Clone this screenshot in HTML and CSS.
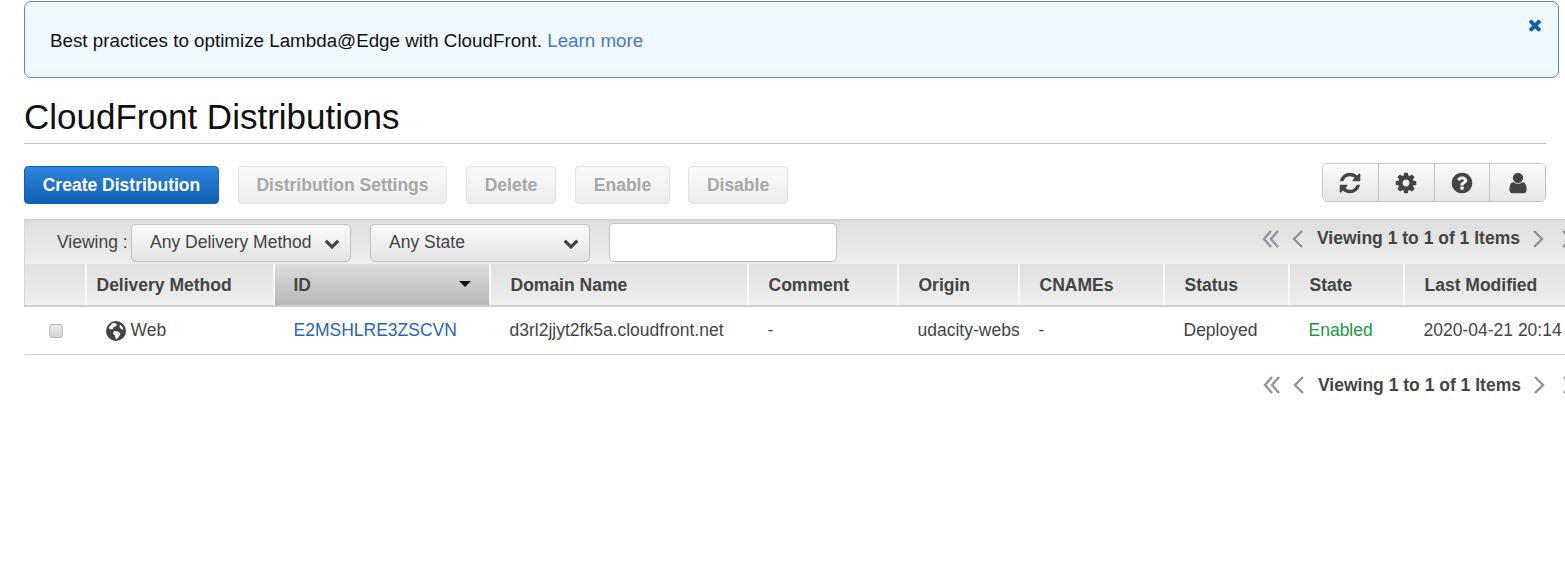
FILE: index.html
```html
<!DOCTYPE html>
<html lang="en">
<head>
  <meta charset="UTF-8">
  <title>CloudFront Distributions</title>
  <link rel="stylesheet" href="styles.css">
</head>
<body>

  <svg class="defs" width="0" height="0">
    <symbol id="i-times" viewBox="0 0 1792 1792"><path d="M1490 1322q0 40-28 68l-136 136q-28 28-68 28t-68-28l-294-294-294 294q-28 28-68 28t-68-28l-136-136q-28-28-28-68t28-68l294-294-294-294q-28-28-28-68t28-68l136-136q28-28 68-28t68 28l294 294 294-294q28-28 68-28t68 28l136 136q28 28 28 68t-28 68l-294 294 294 294q28 28 28 68z"/></symbol>
    <symbol id="i-down" viewBox="0 0 1792 1792"><path d="M1683 808l-742 741q-19 19-45 19t-45-19l-742-741q-19-19-19-45.5t19-45.5l166-165q19-19 45-19t45 19l531 531 531-531q19-19 45-19t45 19l166 165q19 19 19 45.5t-19 45.5z"/></symbol>
    <symbol id="i-first" viewBox="0 0 18 18"><path d="M9 1 2 9l7 8M16 1 9 9l7 8" fill="none" stroke="currentColor" stroke-width="2.4"/></symbol>
    <symbol id="i-prev" viewBox="0 0 12 18"><path d="M10 1 2 9l8 8" fill="none" stroke="currentColor" stroke-width="2.4"/></symbol>
    <symbol id="i-next" viewBox="0 0 12 18"><path d="M2 1l8 8-8 8" fill="none" stroke="currentColor" stroke-width="2.4"/></symbol>
  </svg>

  <div class="alert">
    <p>Best practices to optimize Lambda@Edge with CloudFront. <a href="#">Learn more</a></p>
    <svg class="alert-close"><use href="#i-times"/></svg>
  </div>

  <h1>CloudFront Distributions</h1>

  <div class="actions">
    <button class="btn btn-primary">Create Distribution</button>
    <button class="btn w-settings" disabled>Distribution Settings</button>
    <button class="btn w-delete" disabled>Delete</button>
    <button class="btn w-enable" disabled>Enable</button>
    <button class="btn w-disable" disabled>Disable</button>

    <div class="icon-group">
      <button>
        <svg viewBox="0 0 1792 1792"><path d="M1639 1056q0 5-1 7-64 268-268 434.5t-478 166.5q-146 0-282.5-55t-243.5-157l-129 129q-19 19-45 19t-45-19-19-45v-448q0-26 19-45t45-19h448q26 0 45 19t19 45-19 45l-137 137q71 66 161 102t187 36q134 0 250-65t186-179q11-17 53-117 8-23 30-23h192q13 0 22.5 9.5t9.5 22.5zm25-800v448q0 26-19 45t-45 19h-448q-26 0-45-19t-19-45 19-45l138-138q-148-137-349-137-134 0-250 65t-186 179q-11 17-53 117-8 23-30 23h-199q-13 0-22.5-9.5t-9.5-22.5v-7q65-268 270-434.5t480-166.5q146 0 284 55.5t245 156.5l130-129q19-19 45-19t45 19 19 45z"/></svg>
      </button>
      <button>
        <svg viewBox="0 0 1792 1792"><path d="M1152 896q0-106-75-181t-181-75-181 75-75 181 75 181 181 75 181-75 75-181zm512-109v222q0 12-8 23t-20 13l-185 28q-19 54-39 91 35 50 107 138 10 12 10 25t-9 23q-27 37-99 108t-94 71q-12 0-26-9l-138-108q-44 23-91 38-16 136-29 186-7 28-36 28h-222q-14 0-24.5-8.5t-11.5-21.5l-28-184q-49-16-90-37l-141 107q-10 9-25 9-14 0-25-11-126-114-165-168-7-10-7-23 0-12 8-23 15-21 51-66.5t54-70.5q-27-50-41-99l-183-27q-13-2-21-12.5t-8-23.5v-222q0-12 8-23t19-13l186-28q14-46 39-92-40-57-107-138-10-12-10-24 0-10 9-23 26-36 98.5-107.5t94.5-71.5q13 0 26 10l138 107q44-23 91-38 16-136 29-186 7-28 36-28h222q14 0 24.5 8.5t11.5 21.5l28 184q49 16 90 37l142-107q9-9 24-9 13 0 25 10 129 119 165 170 7 8 7 22 0 12-8 23-15 21-51 66.5t-54 70.5q26 50 41 98l183 28q13 2 21 12.5t8 23.5z"/></svg>
      </button>
      <button>
        <svg viewBox="0 0 1792 1792"><path d="M1024 1376v-192q0-14-9-23t-23-9h-192q-14 0-23 9t-9 23v192q0 14 9 23t23 9h192q14 0 23-9t9-23zm256-672q0-88-55.5-163t-138.5-116-170-41q-243 0-371 213-15 24 8 42l132 100q7 6 19 6 16 0 25-12 53-68 86-92 34-24 86-24 48 0 85.5 26t37.5 59q0 38-20 61t-68 45q-63 28-115.5 86.5t-52.5 125.5v36q0 14 9 23t23 9h192q14 0 23-9t9-23q0-19 21.5-49.5t54.5-49.5q32-18 49-28.5t46-35 44.5-48 28-60.5 12.5-81zm384 192q0 209-103 385.5t-279.5 279.5-385.5 103-385.5-103-279.5-279.5-103-385.5 103-385.5 279.5-279.5 385.5-103 385.5 103 279.5 279.5 103 385.5z"/></svg>
      </button>
      <button>
        <svg viewBox="0 0 1792 1792"><path d="M1536 1399q0 109-62.5 187t-150.5 78h-854q-88 0-150.5-78t-62.5-187q0-85 8.5-160.5t31.5-152 58.5-131 94-89 134.5-34.5q131 128 313 128t313-128q76 0 134.5 34.5t94 89 58.5 131 31.5 152 8.5 160.5zm-256-887q0 159-112.5 271.5t-271.5 112.5-271.5-112.5-112.5-271.5 112.5-271.5 271.5-112.5 271.5 112.5 112.5 271.5z"/></svg>
      </button>
    </div>
  </div>

  <div class="toolbar">
    <span class="viewing-label">Viewing :</span>
    <div class="select select-method">Any Delivery Method <svg><use href="#i-down"/></svg></div>
    <div class="select select-state">Any State <svg><use href="#i-down"/></svg></div>
    <input class="search" type="text">
    <div class="pager">
      <svg class="pg-first"><use href="#i-first"/></svg>
      <svg class="pg-arrow"><use href="#i-prev"/></svg>
      <span>Viewing 1 to 1 of 1 Items</span>
      <svg class="pg-arrow"><use href="#i-next"/></svg>
      <svg class="pg-first"><use href="#i-next"/></svg>
    </div>
  </div>

  <table class="dist-table">
    <colgroup>
      <col class="c-check"><col class="c-method"><col class="c-id"><col class="c-domain"><col class="c-comment">
      <col class="c-origin"><col class="c-cnames"><col class="c-status"><col class="c-state"><col class="c-modified">
    </colgroup>
    <thead>
      <tr>
        <th></th>
        <th class="short">Delivery Method</th>
        <th class="sorted">ID <i class="sort-caret"></i></th>
        <th>Domain Name</th>
        <th>Comment</th>
        <th>Origin</th>
        <th>CNAMEs</th>
        <th>Status</th>
        <th>State</th>
        <th>Last Modified</th>
      </tr>
    </thead>
    <tbody>
      <tr>
        <td class="check-cell"><input class="check" type="checkbox"></td>
        <td class="short">
          <span class="web">
            <svg class="globe" viewBox="0 0 20 20">
              <circle cx="10" cy="10" r="10" fill="#444"/>
              <path d="M6 2.500 9 2l2 1.500-1.500 2-2 .5-.5 2-2.500.500L2.500 7zM8 10l4 .5 2.500 2-1.500 3-2 2.500-1.500-.5-.5-3-2-2zM14 3.500l2.500 2.500 1 3-2.500-1-1.500-2z" fill="#fff"/>
            </svg>
            Web
          </span>
        </td>
        <td><a href="#">E2MSHLRE3ZSCVN</a></td>
        <td>d3rl2jjyt2fk5a.cloudfront.net</td>
        <td>-</td>
        <td class="clip">udacity-webs</td>
        <td>-</td>
        <td>Deployed</td>
        <td class="enabled">Enabled</td>
        <td class="clip">2020-04-21 20:14</td>
      </tr>
    </tbody>
  </table>

  <div class="pager-row">
    <div class="pager pager-bottom">
      <svg class="pg-first"><use href="#i-first"/></svg>
      <svg class="pg-arrow"><use href="#i-prev"/></svg>
      <span>Viewing 1 to 1 of 1 Items</span>
      <svg class="pg-arrow"><use href="#i-next"/></svg>
      <svg class="pg-first"><use href="#i-next"/></svg>
    </div>
  </div>

</body>
</html>
```

FILE: styles.css
```css
html, body {
  overflow: hidden;
}

body {
  box-sizing: border-box;
  margin: 0;
  padding: 1px 0 0 24px;
  width: 1565px;
  height: 578px;
  background: #fff;
  color: #444;
  font-family: "Liberation Sans", Arial, sans-serif;
  font-size: 17.5px;
}

.defs {
  position: absolute;
}

a {
  color: #2a64b8;
  text-decoration: none;
}

/* banner */
.alert {
  position: relative;
  box-sizing: border-box;
  width: 1535px;
  height: 77px;
  padding: 2px 25px 0;
  display: flex;
  align-items: center;
  background: #eff9ff;
  border: 1px solid #5a8ac6;
  border-radius: 7px;
}

.alert p {
  margin: 0;
  color: #111;
  font-size: 18.8px;
}

.alert a {
  color: #4a78c0;
}

.alert-close {
  position: absolute;
  top: 14px;
  right: 14px;
  width: 18px;
  height: 18px;
  fill: #0a5fb4;
}

h1 {
  box-sizing: border-box;
  width: 1522px;
  height: 66px;
  margin: 0;
  padding-top: 19px;
  border-bottom: 1px solid #c4c4c4;
  color: #111;
  font-size: 35px;
  font-weight: normal;
  line-height: 40px;
}

/* action buttons */
.actions {
  display: flex;
  align-items: flex-start;
  width: 1522px;
  height: 75px;
  padding-top: 19px;
  box-sizing: border-box;
}

.btn {
  box-sizing: border-box;
  height: 38px;
  margin: 3px 19px 0 0;
  padding: 0;
  border: 1px solid #e2e2e2;
  border-radius: 4px;
  background: linear-gradient(#fafafa, #ececec);
  color: #a8a8a8;
  font-family: inherit;
  font-size: 17.5px;
  font-weight: bold;
}

.btn-primary {
  width: 195px;
  border-color: #1a5fa8;
  background: linear-gradient(#2f86dc, #0f5fb4);
  color: #fff;
}

.w-settings { width: 209px; }
.w-delete { width: 90px; }
.w-enable { width: 95px; margin-right: 18px; }
.w-disable { width: 100px; margin-right: 0; }

.icon-group {
  box-sizing: border-box;
  display: flex;
  width: 224px;
  height: 39px;
  margin-left: auto;
  border: 1px solid #c4c4c4;
  border-radius: 5px;
  overflow: hidden;
}

.icon-group button {
  flex: 1;
  display: flex;
  align-items: center;
  justify-content: center;
  padding: 0;
  border: none;
  border-left: 1px solid #c4c4c4;
  background: linear-gradient(#fafafa, #e6e6e6);
}

.icon-group button:first-child {
  border-left: none;
}

.icon-group svg {
  width: 24px;
  height: 24px;
  fill: #444;
}

/* filter bar */
.toolbar {
  display: flex;
  align-items: center;
  box-sizing: border-box;
  width: 1541px;
  height: 45px;
  padding-left: 32px;
  border-top: 2px solid #d2d2d2;
  border-left: 1px solid #d8d8d8;
  background: linear-gradient(#dedede, #eeeeee);
  overflow: hidden;
}

.viewing-label {
  flex: none;
  width: 74px;
  white-space: nowrap;
}

.select {
  box-sizing: border-box;
  flex: none;
  display: flex;
  align-items: center;
  justify-content: space-between;
  width: 220px;
  height: 38px;
  margin-right: 19px;
  padding: 0 10px 0 18px;
  border: 1px solid #c4c4c4;
  border-radius: 5px;
  background: linear-gradient(#fafafa, #e4e4e4);
}

.select svg {
  width: 16px;
  height: 16px;
  fill: #444;
}

.search {
  box-sizing: border-box;
  flex: none;
  width: 228px;
  height: 39px;
  border: 1px solid #c4c4c4;
  border-radius: 5px;
  background: #fff;
}

.pager {
  flex: none;
  display: flex;
  align-items: center;
  color: #444;
  font-weight: bold;
  white-space: nowrap;
}

.pager span {
  margin: 0 12px 0 13px;
}

.pager svg {
  flex: none;
  color: #8f959a;
  fill: none;
  height: 18px;
}

.pg-first {
  width: 18px;
}

.pg-arrow {
  width: 12px;
}

.pager .pg-first + .pg-arrow {
  margin-left: 12px;
}

.pager .pg-arrow + .pg-first {
  margin-left: 14px;
}

.toolbar .pager {
  height: 36px;
  margin: -8px 0 0 425px;
}

.pager-row {
  width: 1541px;
  height: 24px;
  margin-top: 18px;
  overflow: hidden;
}

.pager-bottom {
  height: 24px;
  margin-left: 1239px;
}

/* table */
.dist-table {
  table-layout: fixed;
  width: 1541px;
  border-collapse: collapse;
}

.c-check { width: 61px; }
.c-method { width: 188px; }
.c-id { width: 216px; }
.c-domain { width: 258px; }
.c-comment { width: 150px; }
.c-origin { width: 121px; }
.c-cnames { width: 145px; }
.c-status { width: 125px; }
.c-state { width: 115px; }
.c-modified { width: 162px; }

th {
  position: relative;
  height: 39px;
  padding: 2px 20px 0;
  border-bottom: 2px solid #cfcfcf;
  border-left: 2px solid #f8f8f8;
  background: linear-gradient(#e0e0e0, #eeeeee);
  text-align: left;
  font-weight: bold;
  white-space: nowrap;
}

th:first-child {
  border-left: 1px solid #d8d8d8;
}

th.short {
  padding-left: 10px;
}

td.short {
  padding-left: 10px;
}

th.sorted {
  padding-left: 19px;
  background: linear-gradient(#dcdcdc, #b8b8b8);
}

.sort-caret {
  position: absolute;
  top: 17px;
  right: 18px;
  border-style: solid;
  border-width: 6px 6px 0;
  border-color: #111 transparent transparent;
}

td {
  height: 47px;
  padding: 0 20px;
  border-bottom: 1px solid #cfcfcf;
  white-space: nowrap;
  overflow: hidden;
}

td.clip {
  padding-right: 0;
}

.check-cell {
  padding: 0 0 0 24px;
}

.check {
  appearance: none;
  display: block;
  width: 14px;
  height: 14px;
  margin: 0;
  border: 1px solid #bdbdbd;
  border-radius: 3px;
  background: linear-gradient(#e8e8e8, #d4d4d4);
}

.web {
  display: flex;
  align-items: center;
  gap: 5px;
  padding-left: 10px;
}

.globe {
  width: 20px;
  height: 20px;
}

.enabled {
  color: #1d9a3c;
}
```
